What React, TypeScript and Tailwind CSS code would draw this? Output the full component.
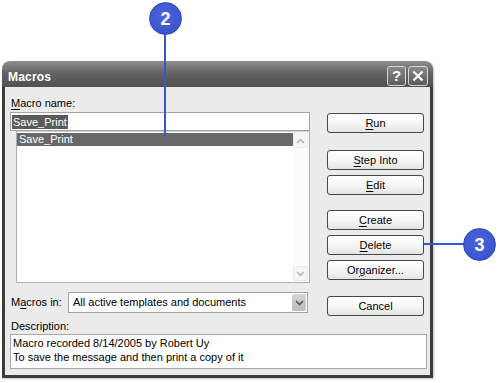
// Macros dialog with numbered callouts
import type { ReactNode } from 'react';

function Key({ children }: { children: ReactNode }) {
  return <span className="underline underline-offset-[2px] decoration-[1px]">{children}</span>;
}

function DialogButton({ children, className = '' }: { children: ReactNode; className?: string }) {
  return (
    <button
      className={`w-[97px] h-[20px] flex items-center justify-center rounded-[3px] border border-[#474747] bg-linear-to-b from-white via-[#f7f7f7] to-[#e4e4e4] text-[11px] leading-none text-black ${className}`}
    >
      {children}
    </button>
  );
}

function Chevron({ up = false, color = '#b5b5b5' }: { up?: boolean; color?: string }) {
  return (
    <svg width="9" height="6" viewBox="0 0 9 6">
      <path
        d={up ? 'M1 5 L4.5 1.5 L8 5' : 'M1 1 L4.5 4.5 L8 1'}
        fill="none"
        stroke={color}
        strokeWidth="1.6"
      />
    </svg>
  );
}

function TitleBar() {
  return (
    <div className="h-[26px] rounded-t-[8px] bg-linear-to-b from-[#8e8e8e] via-[#616161] to-[#515151] flex items-center pt-[3px] pl-[6px] pr-[5px]">
      <span className="text-[12px] font-bold text-white tracking-[0.2px] pt-[2px]">Macros</span>
      <div className="ml-auto flex gap-[2px]">
        <div className="w-[19px] h-[20px] rounded-[3px] border border-[#d6d6d6] bg-linear-to-b from-[#8a8a8a] to-[#5c5c5c] flex items-center justify-center text-white font-bold text-[15px] leading-none">
          ?
        </div>
        <div className="w-[20px] h-[20px] rounded-[3px] border border-[#d6d6d6] bg-linear-to-b from-[#8a8a8a] to-[#5c5c5c] flex items-center justify-center">
          <svg width="12" height="12" viewBox="0 0 12 12">
            <path d="M1.5 1.5 L10.5 10.5 M10.5 1.5 L1.5 10.5" stroke="white" strokeWidth="2.2" />
          </svg>
        </div>
      </div>
    </div>
  );
}

function MacrosDialog() {
  return (
    <div className="w-[431px] h-[317px] flex flex-col shadow-[1px_1px_2px_rgba(0,0,0,0.25)] rounded-t-[8px]">
      <TitleBar />
      <div className="flex-1 border-x-[3px] border-b-[3px] border-[#3d3d3d] bg-[#ebebeb] pt-[9px] pl-[5px] pr-[3px] text-[11px] text-black">
        <div className="flex h-[220px]">
          {/* left column */}
          <div className="w-[300px] flex flex-col">
            <div className="h-[14px] leading-[14px] pl-[1px]">
              <Key>M</Key>acro name:
            </div>
            <div className="mt-[2px] h-[19px] border border-[#a3a3a3] bg-white flex items-center pl-[1px]">
              <span className="bg-[#5b5b5b] text-white px-[1px] leading-[14px]">Save_Print</span>
            </div>
            <div className="ml-[6px] h-[152px] border border-[#b0b0b0] border-t-[#d0d0d0] bg-white flex">
              <div className="flex-1 pt-[1px]">
                <div className="h-[13px] bg-[#686868] text-white leading-[13px] pl-[2px]">Save_Print</div>
              </div>
              <div className="w-[16px] flex flex-col justify-between bg-[#fbfbfb] py-[1px] pr-[1px]">
                <div className="h-[15px] rounded-[2px] border border-[#ececec] bg-[#f6f6f6] flex items-center justify-center">
                  <Chevron up />
                </div>
                <div className="h-[15px] rounded-[2px] border border-[#ececec] bg-[#f6f6f6] flex items-center justify-center">
                  <Chevron />
                </div>
              </div>
            </div>
            <div className="mt-[9px] h-[21px] flex items-center">
              <div className="w-[58px] pl-[1px]">
                M<Key>a</Key>cros in:
              </div>
              <div className="w-[240px] h-[21px] border border-[#a3a3a3] bg-white flex items-center pl-[4px]">
                <span>All active templates and documents</span>
                <div className="ml-auto mr-[1px] w-[14px] h-[17px] rounded-[2px] bg-linear-to-b from-[#d4d4d4] to-[#bcbcbc] flex items-center justify-center">
                  <Chevron color="#555555" />
                </div>
              </div>
            </div>
          </div>
          {/* right column */}
          <div className="ml-[17px] pt-[17px] flex flex-col">
            <DialogButton>
              <Key>R</Key>un
            </DialogButton>
            <DialogButton className="mt-[17px]">
              <Key>S</Key>tep Into
            </DialogButton>
            <DialogButton className="mt-[5px]">
              <Key>E</Key>dit
            </DialogButton>
            <DialogButton className="mt-[15px]">
              <Key>C</Key>reate
            </DialogButton>
            <DialogButton className="mt-[5px]">
              <Key>D</Key>elete
            </DialogButton>
            <DialogButton className="mt-[5px]">
              Or<Key>g</Key>anizer...
            </DialogButton>
            <DialogButton className="mt-[16px]">Cancel</DialogButton>
          </div>
        </div>
        <div className="mt-[3px] h-[14px] leading-[14px] pl-[1px]">Description:</div>
        <div className="mt-[1px] w-[417px] h-[35px] border border-[#a8a8a8] bg-white px-[2px] pt-[1px] leading-[14px]">
          <div>Macro recorded 8/14/2005 by Robert Uy</div>
          <div>To save the message and then print a copy of it</div>
        </div>
      </div>
    </div>
  );
}

function Bubble({ n, className }: { n: string; className: string }) {
  return (
    <div
      className={`absolute w-[33px] h-[33px] rounded-full bg-[radial-gradient(circle_at_45%_40%,#4a63de,#3650c9)] border border-[#2d46bb] flex items-center justify-center text-white font-bold text-[18px] leading-none ${className}`}
    >
      {n}
    </div>
  );
}

export default function App() {
  return (
    <div className="relative w-[500px] h-[383px] bg-white overflow-hidden font-['Liberation_Sans',Arial,sans-serif]">
      <div className="pt-[61px] pl-[2px]">
        <MacrosDialog />
      </div>

      {/* callout 2 */}
      <div className="absolute left-[164px] top-[33px] w-[2px] h-[103px] bg-[#3b55cc]" />
      <Bubble n="2" className="left-[149px] top-[2px]" />

      {/* callout 3 */}
      <div className="absolute left-[424px] top-[243px] w-[41px] h-[2px] bg-[#3b55cc]" />
      <Bubble n="3" className="left-[463px] top-[228px]" />
    </div>
  );
}
